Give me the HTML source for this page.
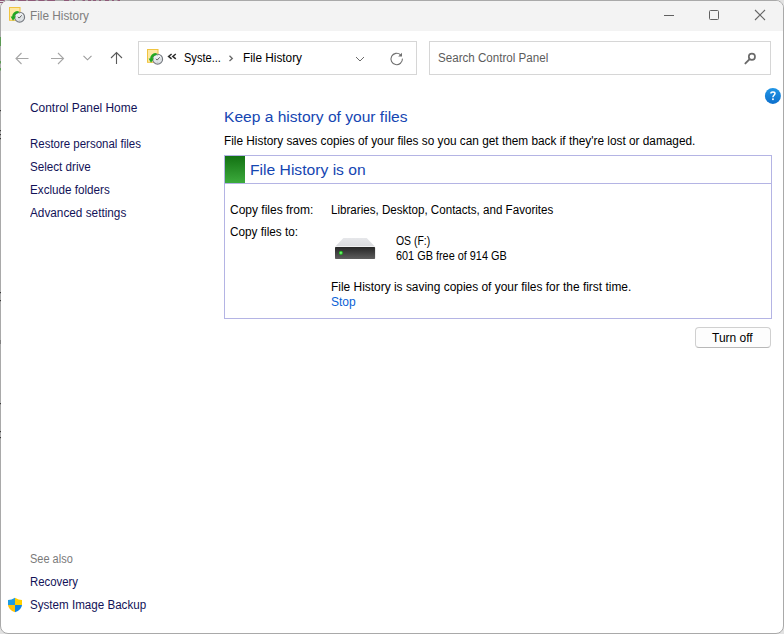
<!DOCTYPE html>
<html><head><meta charset="utf-8">
<style>
html,body{margin:0;padding:0;width:784px;height:634px;overflow:hidden;background:#e2e2e2;}
body{position:relative;font-family:"Liberation Sans",sans-serif;}
.win{position:absolute;left:0;top:0;width:782px;height:632px;border:1px solid #a9a9a9;border-radius:8px;background:#fff;overflow:hidden;}
.titlebar{position:absolute;left:0;top:0;width:782px;height:30px;background:#f3f3f3;}
.t{position:absolute;white-space:nowrap;transform-origin:0 0;font-size:12px;line-height:15px;color:#000;}
.nav{color:#121258;}
svg{position:absolute;overflow:visible;}
.box{position:absolute;border:1px solid #d6d6d6;background:#fff;}
</style></head>
<body>
<div class="win">
  <div class="titlebar"></div>
</div>

<!-- background strip at top (window behind) -->
<svg style="left:0;top:0" width="784" height="3">
  <path d="M0 0.5 H4.8 M10.2 0.5 H15 M18.2 0.5 H26.1 M28 0.5 H35.7 M38.3 0.5 H44.6 M47.2 0.5 H55 M64 0.5 H69 M73 0.5 H75 M82.5 0.5 H85 M88 0.5 H91 M93 0.5 H96 M99 0.5 H101 M105 0.5 H109 M112 0.5 H114 M117.5 0.5 H120" stroke="#8e5a78" stroke-width="1"/>
  <path d="M0 2.5 H3" stroke="#8e5a78" stroke-width="1"/>
</svg>
<svg style="left:0;top:0" width="2" height="634">
  <path d="M0.5 37 V46 M0.5 61 V63.5 M0.5 68 V70.5" stroke="#5a9a52" stroke-width="1"/>
  <path d="M0.5 110 V111.2 M0.5 130 V131.2 M0.5 134 V135.2 M0.5 138 V139.2 M0.5 292 V293.2 M0.5 300 V301.2 M0.5 403 V404.2 M0.5 431 V432.2 M0.5 437 V438.2" stroke="#3a3a3a" stroke-width="1"/>
  <path d="M0.5 340 V344" stroke="#808080" stroke-width="1"/>
</svg>

<!-- title bar -->
<svg style="left:0;top:0" width="784" height="32">
  <defs>
    <linearGradient id="clk" x1="0" y1="0" x2="0" y2="1"><stop offset="0" stop-color="#f4f6f8"/><stop offset="1" stop-color="#d6dade"/></linearGradient>
    <g id="fhicon">
      <rect x="9.5" y="7.5" width="10.5" height="12.8" fill="#fde8a4" stroke="#f0c440" stroke-width="1"/>
      <circle cx="19.6" cy="17.2" r="5" fill="url(#clk)" stroke="#767a80" stroke-width="1.1"/>
      <path d="M17.9 16.8 L19.2 18.1 L21.7 15.3" fill="none" stroke="#3a3a3a" stroke-width="0.8"/>
      <path d="M19.6 13 V13.8 M19.6 20.6 V21.4 M23.4 17.2 H22.6" stroke="#909090" stroke-width="0.6"/>
      <path d="M18.6 12.1 C15.6 12.1 13.5 14.2 13.2 17" fill="none" stroke="#21a821" stroke-width="2.4"/>
      <path d="M10.6 16.6 L16 16.6 L13 20.8 Z" fill="#21a821"/>
    </g>
  </defs>
  <use href="#fhicon"/>
  <!-- window controls -->
  <line x1="664" y1="15.5" x2="674" y2="15.5" stroke="#606060" stroke-width="1"/>
  <rect x="709.5" y="10.5" width="9" height="9" rx="1" fill="none" stroke="#606060" stroke-width="1"/>
  <path d="M755 10 L765 20 M765 10 L755 20" stroke="#666" stroke-width="1.1"/>
</svg>
<div class="t" style="left:30px;top:9px;color:#7e7e7e;transform:scaleX(0.983);">File History</div>

<!-- nav arrows -->
<svg style="left:0;top:40px" width="140" height="36">
  <path d="M16 18.5 H28.5 M21.5 13 L16 18.5 L21.5 24" fill="none" stroke="#a6a6a6" stroke-width="1.1"/>
  <path d="M51 18.5 H63.5 M58 13 L63.5 18.5 L58 24" fill="none" stroke="#a6a6a6" stroke-width="1.1"/>
  <path d="M83.5 15.8 L87.5 19.8 L91.5 15.8" fill="none" stroke="#9a9a9a" stroke-width="1.1"/>
  <path d="M116.5 12.5 V24 M111 18 L116.5 12.5 L122 18" fill="none" stroke="#5a5a5a" stroke-width="1.1"/>
</svg>

<!-- address bar -->
<div class="box" style="left:138px;top:41px;width:277px;height:32px;"></div>
<div class="box" style="left:429px;top:41px;width:340px;height:32px;"></div>
<svg style="left:0;top:0" width="784" height="110">
  <use href="#fhicon" x="138" y="42"/>
  <!-- << -->
  <path d="M171.6 54 L168.6 56.4 L171.6 58.8 M175.8 54 L172.8 56.4 L175.8 58.8" fill="none" stroke="#2e2e2e" stroke-width="1.5"/>
  <!-- > separator -->
  <path d="M229.5 55.8 L232.3 58.4 L229.5 61" fill="none" stroke="#6a6a6a" stroke-width="1.3"/>
  <!-- dropdown -->
  <path d="M356 57 L360 61 L364 57" fill="none" stroke="#6a6a6a" stroke-width="1"/>
  <!-- refresh -->
  <path d="M402.4 58.6 A5.7 5.7 0 1 1 400.6 54.8" fill="none" stroke="#707070" stroke-width="1.1"/>
  <path d="M398.2 56.4 L402 56.4 L402 52.8 Z" fill="#707070"/>
  <!-- magnifier -->
  <circle cx="751.9" cy="56.8" r="3.1" fill="none" stroke="#6a6a6a" stroke-width="1.7"/>
  <path d="M749.6 59.2 L745.4 63.4" stroke="#6a6a6a" stroke-width="1.9" stroke-linecap="round"/>
  <!-- help -->
  <defs><linearGradient id="hlp" x1="0" y1="0" x2="0" y2="1"><stop offset="0" stop-color="#2196e6"/><stop offset="1" stop-color="#0d6fcc"/></linearGradient></defs>
  <circle cx="772.9" cy="95.9" r="8" fill="url(#hlp)"/>
  <path d="M770.9 93.6 C770.9 91.4 775 91.4 775 93.6 C775 95.2 772.9 95.3 772.9 97.2" fill="none" stroke="#fff" stroke-width="1.5"/>
  <rect x="772.1" y="98.4" width="1.7" height="1.7" fill="#fff"/>
</svg>
<div class="t" style="left:184px;top:51px;transform:scaleX(0.921);">Syste...</div>
<div class="t" style="left:243px;top:51px;transform:scaleX(0.983);">File History</div>
<div class="t" style="left:438px;top:51px;color:#5c5c5c;transform:scaleX(0.967);">Search Control Panel</div>

<!-- left pane -->
<div class="t nav" style="left:30px;top:101px;transform:scaleX(0.993);">Control Panel Home</div>
<div class="t nav" style="left:30px;top:137px;transform:scaleX(0.956);">Restore personal files</div>
<div class="t nav" style="left:30px;top:160px;transform:scaleX(0.97);">Select drive</div>
<div class="t nav" style="left:30px;top:183px;transform:scaleX(0.973);">Exclude folders</div>
<div class="t nav" style="left:30px;top:206px;transform:scaleX(0.982);">Advanced settings</div>

<div class="t" style="left:30px;top:552px;color:#7a7a7a;transform:scaleX(0.916);">See also</div>
<div class="t nav" style="left:30px;top:575px;transform:scaleX(0.948);">Recovery</div>
<div class="t nav" style="left:30px;top:598px;transform:scaleX(0.967);">System Image Backup</div>

<!-- main -->
<div class="t" style="left:224px;top:108px;font-size:15.5px;line-height:18px;color:#1546b2;transform:scaleX(1.005);">Keep a history of your files</div>
<div class="t" style="left:224px;top:134px;transform:scaleX(0.985);">File History saves copies of your files so you can get them back if they're lost or damaged.</div>

<div style="position:absolute;left:224px;top:155px;width:546px;height:162px;border:1px solid #b4b4e4;"></div>
<div style="position:absolute;left:225px;top:183px;width:546px;height:1px;background:#b4b4e4;"></div>
<div style="position:absolute;left:225px;top:156px;width:20px;height:27px;background:linear-gradient(#137213,#3caa3c);"></div>
<div class="t" style="left:250px;top:161px;font-size:15.5px;line-height:18px;color:#1546b2;transform:scaleX(1.01);">File History is on</div>

<div class="t" style="left:230px;top:203px;">Copy files from:</div>
<div class="t" style="left:331px;top:203px;transform:scaleX(0.966);">Libraries, Desktop, Contacts, and Favorites</div>
<div class="t" style="left:230px;top:225px;transform:scaleX(0.981);">Copy files to:</div>
<div class="t" style="left:396px;top:234px;transform:scaleX(0.869);">OS (F:)</div>
<div class="t" style="left:396px;top:249px;transform:scaleX(0.907);">601 GB free of 914 GB</div>
<div class="t" style="left:331px;top:280px;transform:scaleX(0.994);">File History is saving copies of your files for the first time.</div>
<div class="t" style="left:331px;top:295px;color:#0b62d6;">Stop</div>

<!-- drive icon -->
<svg style="left:330px;top:232px" width="50" height="32">
  <defs>
    <linearGradient id="drvtop" x1="0" y1="0" x2="0" y2="1"><stop offset="0" stop-color="#e6e7ea"/><stop offset="1" stop-color="#d9dadd"/></linearGradient>
    <linearGradient id="drvfront" x1="0" y1="0" x2="0" y2="1"><stop offset="0" stop-color="#262626"/><stop offset="1" stop-color="#5e5e5e"/></linearGradient>
    <radialGradient id="led"><stop offset="0" stop-color="#b8ffb8"/><stop offset="0.5" stop-color="#3cdc3c"/><stop offset="1" stop-color="#1a9a1a"/></radialGradient>
  </defs>
  <path d="M13.4 5.9 H36.7 L45.1 14.7 H5 Z" fill="url(#drvtop)"/>
  <path d="M5 14.7 H45.1" stroke="#f6f6f6" stroke-width="0.8"/>
  <rect x="5" y="15" width="40.1" height="12" rx="0.8" fill="url(#drvfront)"/>
  <circle cx="10.9" cy="20.9" r="2.1" fill="url(#led)"/>
</svg>
<!-- shield -->
<svg style="left:0;top:590px" width="30" height="30">
  <path d="M15 7.8 Q11.5 10 8 10 V15 Q8 15 8 15 L15 15 Z" fill="#1e9be0"/>
  <path d="M15 7.8 Q18.5 10 22 10 V15 L15 15 Z" fill="#ffd000"/>
  <path d="M8 15 Q8.5 20 15 22.2 V15 Z" fill="#ffc20a"/>
  <path d="M22 15 Q21.5 20 15 22.2 V15 Z" fill="#0b86e6"/>
</svg>
<div style="position:absolute;left:695px;top:327px;width:74px;height:19px;border:1px solid #d0d0d0;border-bottom-color:#b8b8b8;border-radius:4px;background:#fdfdfd;"></div>
<div class="t" style="left:712px;top:331px;">Turn off</div>

</body></html>
